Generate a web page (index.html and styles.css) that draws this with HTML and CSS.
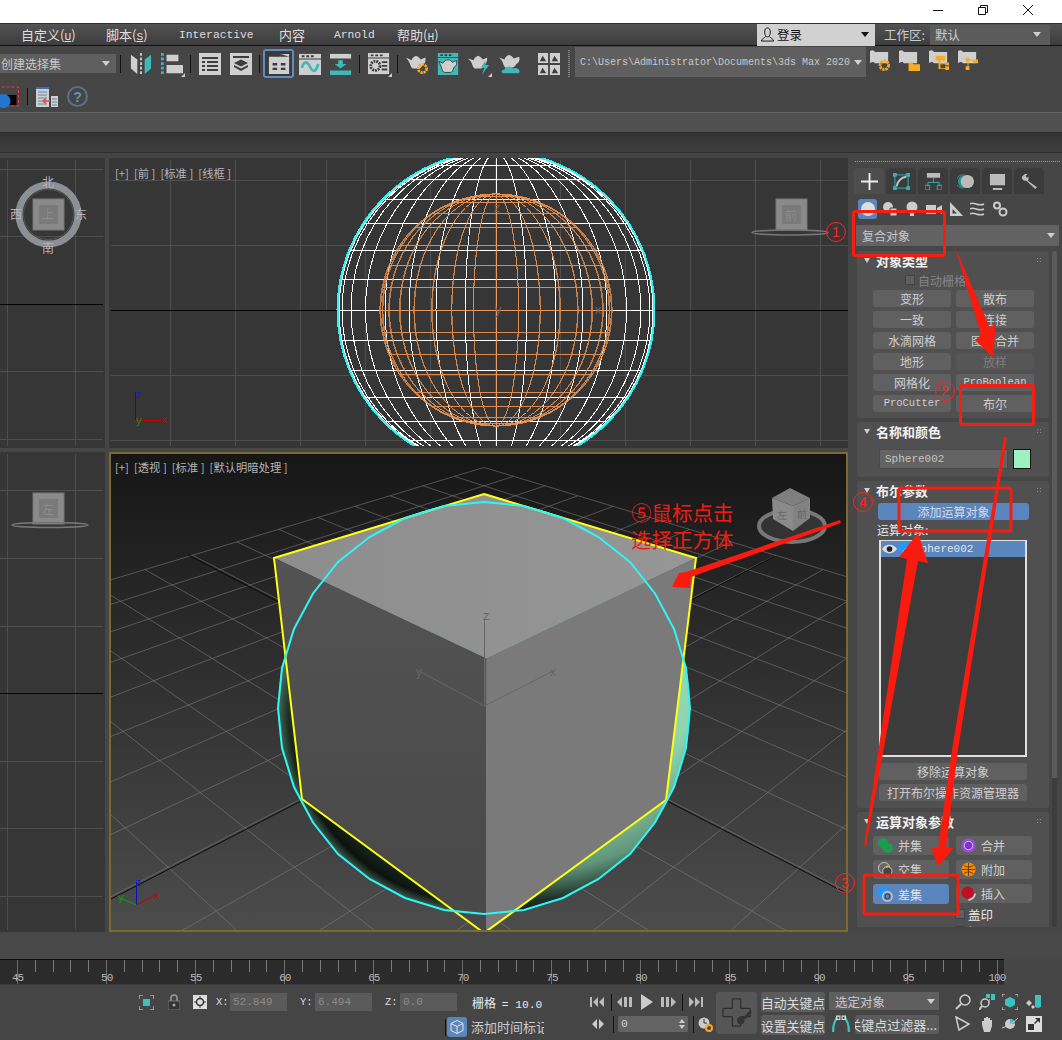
FILE: index.html
```html
<!DOCTYPE html>
<html lang="zh-CN">
<head>
<meta charset="utf-8">
<title>3ds Max 2020</title>
<link rel="stylesheet" href="styles.css">
</head>
<body>
<div class="app">

<header class="titlebar">
  <svg class="winbtn" viewBox="0 0 10 10"><path d="M0 5.500H10"/></svg>
  <svg class="winbtn" viewBox="0 0 10 10"><path d="M.5 2.500H7.500V9.500H.5ZM2.500 2.500V.5H9.500V7.500H7.500"/></svg>
  <svg class="winbtn" viewBox="0 0 10 10"><path d="M0 0L10 10M10 0L0 10"/></svg>
</header>

<nav class="menubar">
  <span class="menu m1">自定义(<u class="la">U</u>)</span>
  <span class="menu m2">脚本(<u class="la">S</u>)</span>
  <span class="menu m3 la">Interactive</span>
  <span class="menu m4">内容</span>
  <span class="menu m5 la">Arnold</span>
  <span class="menu m6">帮助(<u class="la">H</u>)</span>
  <div class="login">
    <svg class="user" viewBox="0 0 16 16"><path d="M5 5.500C5 2 6.500 1 8 1s3 1 3 4.500-1.500 5-3 5-3-1.500-3-5ZM6 10C5 12 2 12 1.500 15H14.500C14 12 11 12 10 10" /></svg>
    <span class="login-text">登录</span><i class="caret dark"></i>
  </div>
  <span class="ws-label">工作区:</span>
  <div class="ws-select"><span>默认</span><i class="caret"></i></div>
</nav>

<section class="toolbar tb1">
  <div class="select sel-set"><span>创建选择集</span><i class="caret"></i></div>
  <i class="sep sep-first"></i>
  <span class="tool"><svg viewBox="0 0 24 24"><path class="l" d="M1 2L8 7V23L1 17Z"/><path class="t" d="M23 2L16 7V23L23 17Z"/><path class="ds" d="M12 0V24" stroke-dasharray="3 2"/></svg></span>
  <span class="tool corner"><svg viewBox="0 0 24 24"><path class="dt" d="M1.500 0V24" stroke-dasharray="3 2"/><path class="l" d="M6 2H19V9H6ZM6 13H24V22H6Z"/></svg></span>
  <i class="sep"></i>
  <span class="tool"><svg viewBox="0 0 22 22"><path class="l" d="M0 0H22V22H0Z"/><path class="k" d="M3 4H19V6H3ZM3 8H6V10H3ZM8 8H19V10H8ZM3 12H6V14H3ZM8 12H19V14H8ZM3 16H6V18H3ZM8 16H19V18H8Z"/></svg></span>
  <span class="tool"><svg viewBox="0 0 22 22"><path class="l" d="M0 0H22V22H0Z"/><path class="k" d="M3 3H19V5H3ZM11 6.500L18 10L11 13.500L4 10ZM4 12L11 15.500L18 12V14L11 18L4 14Z"/></svg></span>
  <i class="sep"></i>
  <span class="tool active"><svg viewBox="0 0 24 22"><path class="l" d="M1 3H14V0H23V22H1Z"/><path class="k" d="M14 0V3H23M5 10H10V12.500H5ZM14 10H19V12.500H14ZM5 15H10V17.500H5ZM14 15H19V17.500H14Z"/></svg></span>
  <span class="tool"><svg viewBox="0 0 24 24"><path class="l" d="M0 1H24V24H0Z"/><path class="k" d="M0 6H24V7H0ZM3 2.500H6V4.500H3ZM8 2.500H11V4.500H8ZM13 2.500H16V4.500H13Z"/><path class="tl" d="M3 16C6 8 9 9 12 15S18 22 21 12"/></svg></span>
  <span class="tool"><svg viewBox="0 0 24 24"><path class="l" d="M0 1H23V6H0Z"/><path class="t" d="M0 19H23V24H0ZM9 8H14V12H18L11.500 17L5 12H9Z"/></svg></span>
  <i class="sep"></i>
  <span class="tool corner"><svg viewBox="0 0 24 24"><path class="l" d="M0 0H23V23H0Z"/><path class="k" d="M0 5H23V6H0ZM3 1.500H6V3.500H3ZM8 1.500H11V3.500H8ZM13 1.500H16V3.500H13ZM15 9H21V11H15ZM15 13H21V15H15ZM15 17H21V19H15Z"/><circle class="kn" cx="8" cy="14" r="5"/></svg></span>
  <i class="sep"></i>
  <span class="tool"><svg viewBox="0 0 24 24"><path class="l" d="M0 5L6 8C7 5 9 4 11 3C13 4 15 5 16 7L21 5C22 8 21 12 18 13C17 15 16 17 14 17H8C6 17 5 14 4 11C3 9 2 8 0 5Z"/><circle class="og" cx="18" cy="17" r="4.500"/></svg></span>
  <span class="tool"><svg viewBox="0 0 24 26"><path class="t" d="M0 0H24V26H0Z"/><path class="k" d="M0 5H24V6H0ZM3 1.500H6V3.500H3ZM8 1.500H11V3.500H8ZM13 1.500H16V3.500H13Z"/><path class="lk" d="M1 10L6 12C8 9 10 8 12 8C14 8 16 9 17 11L22 9C23 12 22 16 19 17C18 20 17 23 15 23H8C6 23 5 20 4 16C3 14 2 12 1 10Z"/></svg></span>
  <span class="tool corner"><svg viewBox="0 0 24 24"><path class="l" d="M0 6L6 8C7 5 9 4 11 3C13 4 15 5 16 7L21 5C21 9 20 12 18 13C17 15 16 17 14 17H8C6 17 5 14 4 11C3 9 2 8 0 6Z"/><path class="t" d="M19 8L14 16H18L15 24L23 13H19Z"/></svg></span>
  <span class="tool tool-last"><svg viewBox="0 0 24 24"><path class="l" d="M0 5L6 7C7 4 9 3 11 2C13 3 15 4 16 6L22 4C23 7 22 11 19 12C18 14 16 16 14 16H8C6 16 5 13 4 10C3 8 2 7 0 5Z"/><path class="t" d="M5 22C2 22 2 18 6 18C7 14 14 14 15 17C19 15 24 18 22 22Z"/></svg></span>
  <span class="tool"><svg viewBox="0 0 24 24"><path class="l" d="M0 0H11V11H0ZM13 0H24V11H13ZM0 13H11V24H0ZM13 13H24V24H13Z"/><path class="k" d="M2 9L5 3L9 9ZM15 9L18 3L22 9ZM2 22L5 16L9 22ZM15 22L18 16L22 22Z"/></svg></span>
  <i class="grip"></i>
  <div class="select path"><span class="la">C:\Users\Administrator\Documents\3ds Max 2020</span><i class="caret"></i></div>
  <span class="tool proj"><svg viewBox="0 0 22 22"><path class="l" d="M0 1C3-1 5 1 5 2H19V14H5C4 12 2 12 0 14Z"/><circle class="og" cx="15" cy="16" r="4.500"/></svg></span>
  <span class="tool proj"><svg viewBox="0 0 22 22"><path class="l" d="M0 1C3-1 5 1 5 2H19V14H5C4 12 2 12 0 14Z"/><path class="o" d="M10 13H14L15 15H22V22H10Z"/></svg></span>
  <span class="tool proj"><svg viewBox="0 0 22 22"><path class="l" d="M0 1C3-1 5 1 5 2H19V14H5C4 12 2 12 0 14Z"/><path class="o" d="M7 6H17V11H7ZM10 11H12V19H17V17H21V21H17V20H10ZM12 14H17V13H21V16H17V15H12Z"/></svg></span>
  <span class="tool proj"><svg viewBox="0 0 22 22"><path class="l" d="M0 1C3-1 5 1 5 2H19V14H5C4 12 2 12 0 14Z"/><path class="o" d="M8 8H12V12H8ZM16 10H21V14H16ZM8 17H12V21H8ZM10 12H11V17H10ZM12 10H16V11H12Z"/></svg></span>
</section>

<section class="toolbar tb2">
  <span class="ball-tool"><svg viewBox="0 0 18 22"><path class="redbox" d="M-4 1H18V20H-4Z"/><rect x="-2" y="9" width="18" height="10" fill="#000"/><circle cx="3" cy="15" r="7" fill="#2175cc"/></svg></span>
  <i class="sep sep-b"></i>
  <span class="tool-b"><svg viewBox="0 0 22 20"><path class="l" d="M0 0H13V20H0Z"/><path class="k" d="M0 0H13V2H0Z"/><path d="M0 0H13V2H0Z" fill="#3a6ebc"/><path class="kb" d="M2 5H11M2 8H11M2 11H11M2 14H11M2 17H11"/><path class="l" d="M15 9H22V20H15Z"/><path class="kb" d="M16 12H21M16 15H21M16 18H21"/><path d="M14 14H7M10 11.500L7 14L10 16.500" fill="none" stroke="#e74c3c" stroke-width="1.500"/></svg></span>
  <span class="help"><span>?</span></span>
</section>

<div class="strip-a"></div>
<div class="strip-b"></div>

<main class="main">
  <div class="views">
    <div class="view">
      <svg viewBox="0 157 105 290">
        <g class="gr"><path d="M7 159V445M75 159V445M0 168H103M0 235H103M0 370H103M0 438H103"/></g>
        <path class="bl" d="M0 303.500H103"/>
        <circle cx="48.500" cy="213.500" r="29.500" class="cube-ring"/>
        <circle cx="48.500" cy="213.500" r="25" class="cube-ring2"/>
        <rect x="33" y="198" width="31" height="31" class="cube-face"/>
        <rect x="39" y="204" width="19" height="19" class="cube-face2"/>
        <text class="vc" x="48" y="218" text-anchor="middle">上</text>
        <text class="vc cp" x="48" y="186" text-anchor="middle">北</text>
        <text class="vc cp" x="48" y="252" text-anchor="middle">南</text>
        <text class="vc cp" x="16" y="218" text-anchor="middle">西</text>
        <text class="vc cp" x="81" y="218" text-anchor="middle">东</text>
      </svg>
    </div>
    <div class="view">
      <svg viewBox="109 157 739 290">
        <defs>
          <g id="ball">
            <ellipse rx="30.600" ry="157"/><ellipse rx="60" ry="157"/><ellipse rx="87" ry="157"/><ellipse rx="111" ry="157"/><ellipse rx="130.500" ry="157"/><ellipse rx="145" ry="157"/><ellipse rx="154" ry="157"/><ellipse rx="157" ry="157"/>
            <path d="M0-157V157M-157 0H157M-154-30.600H154M-154 30.600H154M-145-60H145M-145 60H145M-130.500-87H130.500M-130.500 87H130.500M-111-111H111M-111 111H111M-87-130.500H87M-87 130.500H87M-60-145H60M-60 145H60M-30.600-154H30.600M-30.600 154H30.600"/>
          </g>
          <clipPath id="cf"><rect x="111" y="157" width="737" height="288"/></clipPath>
        </defs>
        <g class="gr"><path d="M170.500 159V445M235.500 159V445M300.500 159V445M365.500 159V445M430.500 159V445M495.500 159V445M560.500 159V445M625.500 159V445M690.500 159V445M755.500 159V445M820.500 159V445M326.500 159V309M111 179.500H848M111 244.500H848M111 374.500H848M111 439.500H848"/></g>
        <path class="bl" d="M111 309.500H848"/>
        <text class="lab" x="115" y="177">[+]  [前 ]  [标准 ]  [线框 ]</text>
        <g clip-path="url(#cf)">
          <circle cx="496" cy="309" r="158" class="cyan-ring"/>
          <use href="#ball" class="wire-w" transform="translate(496 309)"/>
          <use href="#ball" class="wire-o" transform="translate(496 309) scale(.74)"/>
          <use href="#ball" class="wire-o" transform="translate(496 309) scale(.735 .74)"/>
        </g>
        <text class="gz" x="497" y="211" text-anchor="middle">z</text>
        <text class="gz" x="498" y="313" text-anchor="middle">y</text>
        <text class="gz" x="598" y="313" text-anchor="middle">x</text>
        <path d="M135.500 391V419" stroke="#0b0bbf" fill="none"/>
        <path d="M135 419.500H161" stroke="#c00" fill="none"/>
        <text class="ax b" x="138" y="397" text-anchor="middle">z</text>
        <text class="ax g" x="139" y="423" text-anchor="middle">y</text>
        <text class="ax r" x="164" y="422" text-anchor="middle">x</text>
        <rect x="776" y="198" width="31" height="31" class="cube-face"/>
        <rect x="782" y="204" width="19" height="19" class="cube-face2"/>
        <text class="vc" x="791" y="219" text-anchor="middle">前</text>
        <ellipse cx="790" cy="231.500" rx="38" ry="2.500" class="flat-ring"/>
      </svg>
    </div>
    <div class="view">
      <svg viewBox="0 451 105 480">
        <g class="gr"><path d="M7 453V929M75 453V929M0 489.500H103M0 557.500H103M0 625.500H103M0 760.500H103M0 827.500H103M0 895.500H103"/></g>
        <path class="bl" d="M0 692.500H103"/>
        <rect x="33" y="492" width="31" height="31" class="cube-face"/>
        <rect x="39" y="498" width="19" height="19" class="cube-face2"/>
        <text class="vc" x="48" y="513" text-anchor="middle">左</text>
        <ellipse cx="50" cy="524" rx="38" ry="2.500" class="flat-ring"/>
      </svg>
    </div>
    <div class="view active">
      <svg viewBox="111 453 735 476">
        <defs>
          <radialGradient id="sph" cx=".62" cy=".35" r=".7">
            <stop offset="0" stop-color="#a6f2c6"/>
            <stop offset=".6" stop-color="#8fd4ae"/>
            <stop offset=".78" stop-color="#5f957a"/>
            <stop offset=".88" stop-color="#1d2e25"/>
            <stop offset="1" stop-color="#000"/>
          </radialGradient>
          <radialGradient id="rim" gradientUnits="userSpaceOnUse" cx="484" cy="707" r="206">
            <stop offset=".95" stop-color="#7fb89a" stop-opacity="0"/>
            <stop offset="1" stop-color="#7fb89a" stop-opacity=".5"/>
          </radialGradient>
          <linearGradient id="lf" x1="0" y1="0" x2="0" y2="1"><stop offset="0" stop-color="#535353"/><stop offset="1" stop-color="#484848"/></linearGradient>
          <linearGradient id="tf" x1="0" y1="0" x2="1" y2="0"><stop offset="0" stop-color="#8d8d8d"/><stop offset="1" stop-color="#969696"/></linearGradient>
        </defs>
        <g id="floor" class="floor"></g>
        <path class="bl-thin" d="M188 554L340 633M775 555L640 626M301 800L111 898M667 800L846 892"/>
        <circle cx="484" cy="707" r="206" fill="url(#sph)"/>
        <path d="M484 913A206 206 0 0 1 484 501Z" fill="url(#rim)"/>
        <polygon points="484,493 696,557 486,657 274,557" fill="url(#tf)"/>
        <polygon points="274,557 486,657 486,932 302,798" fill="url(#lf)"/>
        <polygon points="696,557 486,657 486,932 666,799" fill="#7a7a7a"/>
        <path class="gzl" d="M484.500 618V705M484.500 705L419 670M484.500 705L553 670M486 657V705"/>
        <text class="gz" x="486" y="619" text-anchor="middle">z</text>
        <text class="gz" x="419" y="675" text-anchor="middle">y</text>
        <text class="gz" x="553" y="675" text-anchor="middle">x</text>
        <path class="yl" d="M484 493L696 557L666 799L484 932L302 798L274 557Z"/>
        <polygon class="cy" points="690,707 686,747 674,786 655,821.500 630,853 598.500,878 563,897 524,909 484,913 444,909 405,897 369.500,878 338,853 313,821.500 294,786 282,747 278,707 282,667 294,628 313,592.500 338,561 369.500,536 405,517 444,505 484,501 524,505 563,517 598.500,536 630,561 655,592.500 674,628 686,667"/>
        <text class="lab" x="115" y="471">[+]  [透视 ]  [标准 ]  [默认明暗处理 ]</text>
        <ellipse cx="792" cy="525" rx="33" ry="16" class="persp-ring"/>
        <polygon points="772,497 790,487 810,497 793,505" fill="#7f7f7f"/>
        <polygon points="772,497 793,505 793,530 773,518" fill="#8a8a8a"/>
        <polygon points="810,497 793,505 793,530 810,517" fill="#838383"/>
        <text class="vc small" x="782" y="518" text-anchor="middle">左</text>
        <text class="vc small" x="802" y="517" text-anchor="middle">前</text>
        <path d="M136.500 881V904" fill="none" stroke="#0b0bbf"/>
        <path d="M136.500 904L157 893" fill="none" stroke="#c00"/>
        <path d="M136.500 904L120 897" fill="none" stroke="#0a0"/>
        <text class="ax b" x="138" y="885" text-anchor="middle">z</text>
        <text class="ax r" x="157" y="898" text-anchor="middle">x</text>
        <text class="ax g" x="121" y="900" text-anchor="middle">y</text>
      </svg>
    </div>
  </div>

  <aside class="panel">
    <div class="panel-grip"></div>
    <div class="tabs">
      <span class="tab on"><svg viewBox="0 0 18 18"><path d="M0 9H18M9 0V18" stroke="#eee" stroke-width="2" fill="none"/></svg></span>
      <span class="tab"><svg viewBox="0 0 18 18"><path d="M2 2H16V16H2ZM3 15C4 8 8 4 15 3" fill="none" stroke="#38b0b0"/><path d="M0 0H4V4H0ZM14 0H18V4H14ZM0 14H4V18H0ZM14 14H18V18H14Z" fill="#38b0b0"/><path d="M4 14C5 8 9 5 14 4" fill="none" stroke="#bbb" stroke-width="2"/></svg></span>
      <span class="tab"><svg viewBox="0 0 18 18"><path d="M2 0H16V5H2Z" fill="#bbb"/><path d="M9 5V10M3 14V10H15V14" fill="none" stroke="#38b0b0"/><path d="M0 13H5V18H0ZM13 13H18V18H13Z" fill="none" stroke="#38b0b0"/></svg></span>
      <span class="tab"><svg viewBox="0 0 18 18"><circle cx="6" cy="9" r="7" fill="none" stroke="#2c8f8f"/><circle cx="8" cy="9" r="7" fill="#2c8f8f"/><circle cx="11" cy="9" r="7" fill="#bbb"/></svg></span>
      <span class="tab"><svg viewBox="0 0 18 18"><path d="M1 1H17V13H1ZM4 16H14V18H4Z" fill="#bbb"/></svg></span>
      <span class="tab"><svg viewBox="0 0 18 18"><path d="M1 4L4 1L7 1L5 3L6 5L8 4L8 7L7 8L17 15L15 17L6 8.500L3 8L1 6Z" fill="#bbb"/></svg></span>
    </div>
    <div class="subtabs">
      <span class="sub on"><svg viewBox="0 0 16 16"><circle cx="8" cy="8" r="7" fill="#ddd"/></svg></span>
      <span class="sub"><svg viewBox="0 0 16 16"><circle cx="6" cy="6" r="5" fill="#ccc"/><path d="M8 7H15V15H8Z" fill="#ccc" stroke="#444"/></svg></span>
      <span class="sub"><svg viewBox="0 0 16 16"><circle cx="8" cy="6" r="5.500" fill="#ccc"/><path d="M6 12H10V15H6Z" fill="#ccc"/></svg></span>
      <span class="sub"><svg viewBox="0 0 16 16"><path d="M0 4H10V13H0ZM11 7L16 4V13L11 10Z" fill="#ccc"/></svg></span>
      <span class="sub"><svg viewBox="0 0 16 16"><path d="M2 1V15H15ZM4.500 8V12.500H9Z" fill="#ccc" fill-rule="evenodd"/></svg></span>
      <span class="sub"><svg viewBox="0 0 16 16"><path d="M0 3C4 0 8 6 14 3M0 8C4 5 8 11 14 8M0 13C4 10 8 16 14 13" fill="none" stroke="#ccc" stroke-width="1.500"/></svg></span>
      <span class="sub"><svg viewBox="0 0 16 16"><circle cx="5" cy="4.500" r="3" fill="none" stroke="#ccc" stroke-width="2"/><circle cx="11" cy="11" r="3.500" fill="none" stroke="#ccc" stroke-width="2"/></svg></span>
    </div>
    <div class="select cat"><span>复合对象</span><i class="caret"></i></div>
    <div class="rollouts-wrap">
      <div class="rollouts">
        <section class="rollout r1">
          <h3><i class="tri"></i>对象类型<i class="dots"></i></h3>
          <label class="autogrid"><i class="check"></i>自动栅格</label>
          <div class="btn-grid">
            <button>变形</button><button>散布</button>
            <button>一致</button><button>连接</button>
            <button>水滴网格</button><button>图形合并</button>
            <button>地形</button><button class="dim">放样</button>
            <button>网格化</button><button class="la">ProBoolean</button>
            <button class="la">ProCutter</button><button>布尔</button>
          </div>
        </section>
        <section class="rollout r2">
          <h3><i class="tri"></i>名称和颜色<i class="dots"></i></h3>
          <div class="name-row"><div class="input la">Sphere002</div><i class="swatch"></i></div>
        </section>
        <section class="rollout r3">
          <h3><i class="tri"></i>布尔参数<i class="dots"></i></h3>
          <button class="wide blue">添加运算对象</button>
          <div class="list-label">运算对象:</div>
          <div class="list">
            <div class="list-row">
              <svg class="eye" viewBox="0 0 16 10"><path d="M0 5C4-1 12-1 16 5C12 11 4 11 0 5Z" fill="#ddd"/><circle cx="8" cy="5" r="3" fill="#222"/></svg>
              <svg class="subt" viewBox="0 0 16 16"><circle cx="6" cy="6" r="6" fill="#1e9bff"/><circle cx="10" cy="11" r="4.500" fill="#444" stroke="#ccc"/></svg>
              <span class="la">Sphere002</span>
            </div>
          </div>
          <button class="wide">移除运算对象</button>
          <button class="wide w2">打开布尔操作资源管理器</button>
        </section>
        <section class="rollout r4">
          <h3><i class="tri"></i>运算对象参数<i class="dots"></i></h3>
          <div class="op-grid">
            <button class="op"><svg viewBox="0 0 16 16"><circle cx="5.500" cy="5.500" r="5.500" fill="#1e9b4e"/><circle cx="10.500" cy="10.500" r="5.500" fill="#1e9b4e"/></svg>并集</button>
            <button class="op"><svg viewBox="0 0 16 16"><circle cx="8" cy="8" r="7.500" fill="#9a4be0"/><circle cx="8" cy="8" r="4.500" fill="#7a3ac0" stroke="#d8c0f0"/></svg>合并</button>
            <button class="op"><svg viewBox="0 0 16 16"><circle cx="6.500" cy="6.500" r="6" fill="#666" stroke="#ccc"/><circle cx="10" cy="10" r="5" fill="#444" stroke="#ccc"/><path d="M8 5L10 3V7Z" fill="#fc0"/></svg>交集</button>
            <button class="op"><svg viewBox="0 0 16 16"><circle cx="8" cy="8" r="7.500" fill="#f08a0d"/><path d="M1 8H15M8 1V15M3 3.500C6 6 10 6 13 3.500M3 12.500C6 10 10 10 13 12.500" stroke="#6a3a05" fill="none"/></svg>附加</button>
            <button class="op on"><svg viewBox="0 0 16 16"><circle cx="6" cy="6" r="6" fill="#1e9bff"/><circle cx="10" cy="10" r="5" fill="#5b85bd" stroke="#ccc" stroke-width="1.500"/><circle cx="10" cy="10" r="2.500" fill="#5b85bd" stroke="#333"/></svg>差集</button>
            <button class="op"><svg viewBox="0 0 16 16"><circle cx="7" cy="7" r="6.500" fill="#c30d20"/><path d="M8 15C12 14 15 11 15 8" stroke="#ccc" stroke-width="2" fill="none"/></svg>插入</button>
          </div>
          <label class="imprint"><i class="check"></i>盖印</label>
          <label class="imprint"><i class="check"></i>切面</label>
        </section>
      </div>
      <div class="scroll"></div>
    </div>
  </aside>
</main>

<div class="track"></div>
<div class="ruler">
  <span>45</span><span>50</span><span>55</span><span>60</span><span>65</span><span>70</span><span>75</span><span>80</span><span>85</span><span>90</span><span>95</span><span class="last">100</span>
</div>

<footer class="status">
  <div class="st-left">
    <div class="st-row1">
      <svg class="ic15" viewBox="0 0 15 15"><path d="M0 4V0H4M11 0H15V4M15 11V15H11M4 15H0V11" fill="none" stroke="#ddd"/><path d="M4 4H11V11H4Z" fill="#3fc0c0"/></svg>
      <svg class="ic-lock" viewBox="0 0 12 16"><path d="M3 7V4C3 0 9 0 9 4V7" fill="none" stroke="#999" stroke-width="1.500"/><path d="M0 7H12V16H0Z" fill="#333" stroke="#777"/><circle cx="6" cy="11" r="1.500" fill="#aaa"/></svg>
      <svg class="ic-box" viewBox="0 0 14 14"><path d="M0 0H14V14H0Z" fill="#ddd"/><path d="M1 7H13M7 1V13" stroke="#444"/><circle cx="7" cy="7" r="3.500" fill="#ddd" stroke="#333" stroke-width="1.500"/></svg>
      <span class="coord-l la">X:</span><span class="coord la">52.849</span>
      <span class="coord-l g la">Y:</span><span class="coord la">6.494</span>
      <span class="coord-l g la">Z:</span><span class="coord la">0.0</span>
      <span class="grid-text">栅格 <span class="la">= 10.0</span></span>
    </div>
    <div class="st-row2">
      <i class="sep sep-s"></i>
      <span class="time-btn"><svg viewBox="0 0 14 14"><path d="M7 0.500L13 3.500V10.500L7 13.500L1 10.500V3.500ZM1 3.500L7 6.500L13 3.500M7 6.500V13.500" fill="none" stroke="#e6e6e6"/></svg></span>
      <span class="time-text">添加时间标记</span>
    </div>
  </div>

  <div class="st-anim">
    <div class="an-row">
      <svg class="an" viewBox="0 0 15 12"><path d="M0 1H2V11H0ZM8 1V11L3 6ZM14 1V11L9 6Z" fill="#bbb"/></svg>
      <i class="sep sep-a"></i>
      <svg class="an" viewBox="0 0 15 12"><path d="M5 1V11L0 6ZM7 1H10V11H7ZM12 1H15V11H12Z" fill="#bbb"/></svg>
      <svg class="an-play" viewBox="0 0 12 16"><path d="M0 0L12 8L0 16Z" fill="#ccc"/></svg>
      <svg class="an" viewBox="0 0 15 12"><path d="M0 1H3V11H0ZM5 1H8V11H5ZM10 1L15 6L10 11Z" fill="#bbb"/></svg>
      <i class="sep sep-a"></i>
      <svg class="an" viewBox="0 0 15 12"><path d="M1 1L6 6L1 11ZM7 1L12 6L7 11ZM13 1H15V11H13Z" fill="#bbb"/></svg>
    </div>
    <div class="an-row r2">
      <svg class="an-key" viewBox="0 0 12 10"><path d="M5 0V10L0 5ZM7 0L12 5L7 10Z" fill="#ccc"/></svg>
      <i class="sep sep-a"></i>
      <div class="spin"><span class="la">0</span><svg class="spin-arrows" viewBox="0 0 6 10"><path d="M3 0L6 4H0ZM0 6H6L3 10Z" fill="#ccc"/></svg></div>
      <i class="sep sep-a"></i>
      <svg class="ic15" viewBox="0 0 15 15"><circle cx="6" cy="6" r="5.500" fill="#ccc"/><path d="M6 2V6H9" stroke="#333" fill="none"/><circle cx="11" cy="11" r="3" fill="none" stroke="#f5a623" stroke-width="2"/></svg>
    </div>
  </div>

  <div class="bigkey"><svg viewBox="0 0 32 32"><path d="M11 1H20V11H30V20H20V30H11V20H1V11H11Z" fill="none" stroke="#222"/><circle cx="20" cy="24" r="4" fill="#333"/><path d="M22 21L30 13L32 15L25 23Z" fill="#333"/></svg></div>

  <div class="st-keys">
    <div class="key-row"><button class="kb-btn">自动关键点</button><div class="select sel-track"><span>选定对象</span><i class="caret"></i></div></div>
    <div class="key-row k2">
      <button class="kb-btn">设置关键点</button>
      <svg class="ic-filter" viewBox="0 0 16 16"><path d="M1 15C1 8 3 4 5 2M15 15C15 8 13 4 11 2" fill="none" stroke="#3fc0c0" stroke-width="2"/><path d="M4 1H7V4H4ZM9 1H12V4H9Z" fill="none" stroke="#ddd"/></svg>
      <button class="filter"><span>关键点过滤器...</span></button>
    </div>
  </div>

  <div class="st-nav">
    <svg viewBox="0 0 16 16"><circle cx="10" cy="6" r="5" fill="none" stroke="#ccc" stroke-width="1.500"/><path d="M6 10L1 15" stroke="#ccc" stroke-width="2"/></svg>
    <svg viewBox="0 0 16 16"><circle cx="6" cy="9" r="4" fill="none" stroke="#ccc" stroke-width="1.500"/><path d="M3 12L0 16" stroke="#ccc" stroke-width="2"/><path d="M7 0H11V4H7ZM12 0H16V6H12ZM10 5H11V8H10Z" fill="#3fc0c0"/></svg>
    <svg viewBox="0 0 16 16"><path d="M0 3V0H3M13 0H16V3M16 13V16H13M3 16H0V13" fill="none" stroke="#ddd"/><path d="M8 3L13 5.500V11L8 13.500L3 11V5.500Z" fill="#3fc0c0"/></svg>
    <svg viewBox="0 0 16 16"><path d="M9 1H15V13L12 14L9 13Z" fill="#3fc0c0"/><path d="M0 9L3 6L6 9L3 12ZM5 13L7 11L9 13L7 15Z" fill="#ccc"/></svg>
    <svg viewBox="0 0 16 16"><path d="M1 1L14 8L4 14Z" fill="none" stroke="#ccc" stroke-width="1.500"/></svg>
    <svg viewBox="0 0 16 16"><path d="M3 9V5H5V2H7V1H9V2H11V4H13V10L11 16H5Z" fill="#ccc"/></svg>
    <svg viewBox="0 0 16 16"><circle cx="8" cy="8" r="5" fill="#ccc"/><path d="M8 8L8 3A5 5 0 0 1 13 8Z" fill="#3fc0c0"/><path d="M0 12C6 10 11 7 16 2" stroke="#ccc" fill="none"/></svg>
    <svg viewBox="0 0 16 16"><path d="M0 0H16V16H0Z" fill="#ddd"/><path d="M2 8H8V14H2ZM9 2H14V7L12 5L9 8L8 7L11 4Z" fill="#333"/></svg>
  </div>
</footer>

<svg class="annot" viewBox="0 0 1062 1040">
  <g class="rbox">
    <rect x="853.500" y="211.500" width="91" height="44" rx="2"/>
    <rect x="960.500" y="385.500" width="73" height="39" rx="2"/>
    <rect x="899" y="488" width="112" height="43" rx="2"/>
    <rect x="864" y="875" width="94" height="39" rx="2"/>
  </g>
  <g class="rarrow">
    <polygon points="955,247 990,328 996,322 993,357 975,340 981,335"/>
    <polygon points="1004,437 1007,437 958,750 946,848 954,848 938,866 931,848 938,848 952,750"/>
    <polygon points="864,846 866,846 918,561 928,563 918,533 899,557 907,559"/>
    <polygon points="840,520 841,523 691,577 690,588 672,587 679,573 686,572"/>
  </g>
  <g class="rnum">
    <circle cx="836" cy="232" r="9.500"/><text x="836" y="237" text-anchor="middle">1</text>
    <circle cx="945" cy="391" r="9.500"/><text x="945" y="396" text-anchor="middle">2</text>
    <circle cx="845" cy="883" r="9.500"/><text x="845" y="888" text-anchor="middle">3</text>
    <circle cx="863" cy="502" r="9.500"/><text x="863" y="507" text-anchor="middle">4</text>
  </g>
  <text class="rtext" x="631" y="521">⑤鼠标点击</text>
  <text class="rtext" x="631" y="548">选择正方体</text>
</svg>

</div>
<script src="grid.js"></script>
</body>
</html>
```

FILE: styles.css
```css
*{box-sizing:border-box}
html,body{margin:0;padding:0}
body{background:#454545;font-family:"Noto Sans CJK SC","Liberation Sans",sans-serif;font-size:12.500px;color:#cfcfcf;overflow:hidden}
.app{position:relative;width:1062px;height:1040px;overflow:hidden;background:#464646}
.la{font-family:"Liberation Mono","Noto Sans CJK SC",monospace;font-size:11.300px}
i{display:block;font-style:normal}
button{font:inherit;color:inherit;border:0;padding:0;margin:0;background:none}
svg{display:block}

/* title */
.titlebar{height:23px;background:#fff;display:flex;justify-content:flex-end;align-items:center;padding:0 29px 3px 0;gap:35px}
.winbtn{width:10px;height:10px;fill:none;stroke:#111;stroke-width:1}

/* menu */
.menubar{height:23px;background:linear-gradient(#525252,#3d3d3d);border-top:1px solid #2f2f2f;border-bottom:1px solid #111;display:flex;align-items:center}
.menu{color:#dedede;white-space:nowrap;font-size:13px}
.menu.la{font-size:11.300px}
.m1{margin-left:21px;width:85px}
.m2{width:73px}
.m3{width:100px}
.m4{width:55px}
.m5{width:63px}
.m6{width:50px}
.login{margin-left:310px;width:118px;height:22px;background:#d1d1d1;color:#111;display:flex;align-items:center;padding-left:3px}
.user{width:15px;height:15px;fill:none;stroke:#111;stroke-width:1}
.login-text{margin-left:2px;flex:1;font-size:12.500px}
.ws-label{margin-left:9px;width:46px;font-size:12.500px;color:#ccc}
.ws-select{width:120px;height:20px;background:#5b5b5b;display:flex;align-items:center;justify-content:space-between;padding:0 5px;color:#ccc}
.caret{width:0;height:0;border-left:4px solid transparent;border-right:4px solid transparent;border-top:5px solid #cfcfcf;margin-right:4px}
.caret.dark{border-top-color:#111;margin-right:6px}

/* toolbars */
.toolbar{display:flex;align-items:center;background:#454545}
.tb1{height:35px}
.tb2{height:31px}
.select{background:#5f5f5f;display:flex;align-items:center;justify-content:space-between;color:#c8c8c8;white-space:nowrap}
.sel-set{width:116px;height:19px;padding-left:1px;margin-top:-1px;font-size:12px}
.sel-set .caret{margin-right:6px}
.sep{width:7px;height:18px;background:linear-gradient(#111,#111) center/1px 100% no-repeat;flex:none}
.sep-first{width:9px}
.tool{width:31px;height:29px;display:flex;align-items:center;justify-content:center;flex:none;position:relative}
.tool svg{width:22px;height:22px}
.tool.active{background:#3a3a3a;border:2px solid #5f8bc4;border-radius:3px}
.tool.corner::after{content:"";position:absolute;right:2px;bottom:1px;border-left:4px solid transparent;border-bottom:4px solid #ccc}
.tool-last{margin-right:8px}
.grip{width:2px;height:28px;margin:0 5px 0 4px;background:repeating-linear-gradient(#888 0 1px,transparent 1px 2px)}
.path{width:291px;height:30px;padding-left:5px;margin-top:-3px;flex:none}
.path .la{font-size:10px}
.proj{width:29.300px;margin-top:-7px}
.proj svg{width:21px;height:21px}
.l{fill:#cfcfcf}
.k{fill:#3d3d3d}
.t{fill:#3fb8b8}
.o{fill:#f5ab23}
.og{fill:none;stroke:#f5a623;stroke-width:3;stroke-dasharray:2.500 .8}
.kn{fill:none;stroke:#3d3d3d;stroke-width:3;stroke-dasharray:2 1}
.ds{stroke:#cfcfcf;stroke-width:2;fill:none}
.dt{stroke:#3fb8b8;stroke-width:3;fill:none}
.tl{fill:none;stroke:#3fb8b8;stroke-width:3}
.lk{fill:#cfcfcf;stroke:#333}
.kb{stroke:#6b84a6;stroke-width:1;fill:none}
.ball-tool{width:19px;height:22px;flex:none}
.ball-tool svg{width:19px;height:22px;overflow:hidden}
.redbox{fill:none;stroke:#f33;stroke-dasharray:3 2}
.sep-b{margin-left:5px;height:17px}
.tool-b{width:22px;height:20px;margin-left:5px;flex:none}
.tool-b svg{width:22px;height:20px}
.help{width:21px;height:21px;margin-left:9px;border-radius:50%;border:2px solid #5d6f84;background:#40464d;display:flex;align-items:center;justify-content:center;font-weight:700;font-family:"Liberation Sans",sans-serif;font-size:14px;color:#7f8a96;flex:none}
.strip-a{height:21px;background:#505050;border-top:1px solid #666;border-bottom:1px solid #2c2c2c}
.strip-b{height:25px;background:linear-gradient(#333 0,#3f3f3f 19px,#2e2e2e 19px,#2e2e2e 20px,#444 20px)}

/* viewports */
.main{display:flex;height:774px}
.views{width:851px;display:grid;grid-template-columns:105px 739px;grid-template-rows:290px 480px;column-gap:4px;row-gap:4px}
.view{background:#363636;overflow:hidden}
.view svg{width:100%;height:100%}
.view.active{border:2px solid #7a6a30;background:linear-gradient(#161616,#4c4c4c)}
.gr{stroke:#4e4e4e;fill:none;shape-rendering:crispEdges}
.bl{stroke:#050505;fill:none;shape-rendering:crispEdges}
.bl-thin{stroke:#0a0a0a;fill:none}
.lab{font-size:11.300px;fill:#b5b5b5;white-space:pre;font-family:"Noto Sans CJK SC",sans-serif}
.vc{font-size:12px;fill:#8c8c8c;font-family:"Noto Sans CJK SC",sans-serif}
.vc.cp{fill:#b4b4b4}
.vc.small{font-size:10px;fill:#666}
.gz{font-size:12px;fill:#666;font-family:"Liberation Mono",monospace}
.ax{font-size:11px;font-family:"Liberation Mono",monospace}
.ax.b{fill:#1a1ad0}
.ax.g{fill:#0a9a0a}
.ax.r{fill:#b01010}
.cube-ring{fill:none;stroke:#8b8f96;stroke-width:7}
.cube-ring2{fill:none;stroke:#555;stroke-width:1}
.cube-face{fill:#8a8a8a;stroke:#777}
.cube-face2{fill:#7a7a7a}
.flat-ring{fill:none;stroke:#777;stroke-width:1.500}
.persp-ring{fill:#333;stroke:#777;stroke-width:4}
.cyan-ring{fill:none;stroke:#2ef2f2;stroke-width:3;shape-rendering:crispEdges}
.wire-w{fill:none;stroke:#fff;stroke-width:1;shape-rendering:crispEdges}
.wire-w *,.wire-o *{vector-effect:non-scaling-stroke}
.wire-o{fill:none;stroke:#e8914f;stroke-width:1;shape-rendering:crispEdges}
.floor line{stroke:#808080;stroke-opacity:.55;stroke-width:1}
.gzl{stroke:#666;fill:none}
.yl{fill:none;stroke:#ffff14;stroke-width:2}
.cy{fill:none;stroke:#2ef6f6;stroke-width:2}

/* command panel */
.panel{width:211px;display:flex;flex-direction:column;padding-left:2px;min-width:0}
.panel-grip{height:10px;background:repeating-linear-gradient(90deg,#999 0 1px,transparent 1px 2px) 2px 3px/205px 1px no-repeat}
.tabs{display:flex;height:26px;gap:2px;padding-left:1px}
.tab{width:30px;height:26px;border-radius:4px 4px 0 0;background:#3b3b3b;display:flex;align-items:center;justify-content:center}
.tab.on{background:#4d4d4d}
.tab svg{width:17px;height:17px}
.subtabs{display:flex;align-items:center;height:29px;gap:3px;padding-left:5px;background:#464646}
.sub{width:19px;height:20px;display:flex;align-items:center;justify-content:center;border-radius:3px}
.sub.on{background:#5b85bd}
.sub svg{width:16px;height:16px}
.cat{width:203px;height:21px;margin:2px 0 0 3px;padding-left:6px;flex:none;background:#626262;font-size:12px}
.rollouts-wrap{display:flex;height:677px;margin-top:5px;overflow:hidden;margin-left:4px}
.rollouts{width:192px;display:flex;flex-direction:column;gap:4px;overflow:hidden;height:676px}
.rollout{background:#505050;border-radius:3px;flex:none;padding:0 16px}
.rollout h3{margin:0 -16px;padding:0 0 2px 19px;height:20px;font-size:13px;line-height:17px;font-weight:700;color:#f2f2f2;position:relative;display:flex;align-items:center}
.tri{position:absolute;left:7px;top:7px;border-left:3.500px solid transparent;border-right:3.500px solid transparent;border-top:5px solid #cfcfcf}
.dots{position:absolute;right:6px;top:6px;width:7px;height:7px;background:radial-gradient(circle,#8a8a8a 0 .8px,transparent .9px) 0 0/3px 3px}
.r1{height:167px}
.r2{height:55px}
.r3{height:327px}
.r4{height:200px}
.autogrid{display:flex;align-items:center;gap:3px;color:#858585;height:18px;padding-left:32px;font-size:12px}
.check{width:10px;height:10px;background:#5f5f5f;border:1px solid #444;flex:none}
.btn-grid{display:grid;grid-template-columns:78px 78px;gap:4px 5px;margin-top:1px}
.btn-grid button{height:17px;background:#606060;border-radius:3px;color:#cfcfcf;font-size:12px;line-height:17px;white-space:nowrap;overflow:hidden}
.btn-grid .dim{color:#7e7e7e;background:#565656}
.btn-grid .la{font-size:10.500px}
.name-row{display:flex;gap:5px;margin:7px 0 0 6px}
.input{width:129px;height:20px;background:#636363;border:1px solid #4a4a4a;padding-left:5px;line-height:18px;color:#c4c4c4;font-size:11px}
.swatch{width:18px;height:20px;background:#9df0c0;border:1px solid #111}
.wide{display:block;width:148px;height:17px;margin-left:6px;background:#606060;border-radius:3px;color:#cfcfcf;font-size:12px;line-height:17px;white-space:nowrap}
.wide.blue{width:151px;margin-left:5px;margin-top:2px;background:#5b85bd;color:#d6dde8}
.wide.w2{margin-top:4px}
.list-label{font-size:12px;margin:1px 0 0 4px;height:19px;line-height:18px;color:#ececec}
.list{width:148px;height:217px;margin:0 0 6px 6px;background:#3c3c3c;border:2px solid #e0e0e0;border-top-width:1px}
.list-row{height:16px;background:#5b85bd;display:flex;align-items:center;gap:1px;color:#e6e6e6;padding-left:1px}
.eye{width:15px;height:10px}
.subt{width:15px;height:15px}
.list-row .la{font-size:11px}
.op-grid{display:grid;grid-template-columns:76px 76px;gap:5px 7px;margin-top:4px}
.op{height:19px;background:#606060;border-radius:3px;display:flex;align-items:center;gap:5px;padding-left:5px;font-size:12px;color:#cfcfcf}
.op svg{width:15px;height:15px}
.op.on{background:#5b85bd;color:#e6e6e6;height:20px}
.imprint{display:flex;align-items:center;gap:3px;margin:3px 0 0 82px;font-size:12.500px;height:14px;color:#e8e8e8}
.scroll{width:5px;height:676px;margin-left:3px;border-radius:3px;background:linear-gradient(#5a5a5a,#5a5a5a) 0 0/5px 527px no-repeat #3d3d3d}

/* time ruler */
.track{height:27px;background:#484848}
.ruler{height:26px;width:1004px;background:repeating-linear-gradient(90deg,#7a7a7a 0 1px,transparent 1px 17.810px) 16.500px 0/987px 12px no-repeat #2b2b2b;border-top:1px solid #0c0c0c;border-bottom:1px solid #3a3a3a;display:flex;padding-left:17px}
.ruler span{flex:none;width:89.060px;border-left:1px solid #6d6d6d;height:100%;font-size:11px;letter-spacing:-1px;font-family:"Liberation Mono",monospace;color:#b8b8b8;display:block;text-indent:-6px;padding-top:11px;line-height:14px;white-space:nowrap}
.ruler .last{text-indent:-9px;width:8px}

/* status */
.status{height:56px;display:flex;background:#454545}
.st-left{width:590px;flex:none}
.st-row1{display:flex;align-items:center;height:18px;margin-top:8px;padding-left:139px}
.ic15{width:15px;height:15px;flex:none}
.ic-lock{width:12px;height:16px;margin-left:14px}
.ic-box{width:14px;height:14px;margin-left:13px}
.coord-l{width:14px;margin-left:9px;color:#dcdcdc;font-size:10.500px}
.coord-l.g{margin-left:13px;width:15px}
.coord{width:57px;height:18px;background:#5a5a5a;color:#8a8a8a;padding-left:3px;line-height:19px;font-size:11px}
.grid-text{margin-left:15px;color:#e8e8e8;white-space:pre;font-size:12px}
.grid-text .la{font-size:11.300px;margin-left:3px}
.st-row2{display:flex;align-items:center;height:20px;margin-top:6px;padding-left:443px}
.sep-s{width:4px;height:17px}
.time-btn{width:20px;height:20px;background:#5b85bd;border-radius:3px;display:flex;align-items:center;justify-content:center;flex:none}
.time-btn svg{width:14px;height:14px}
.time-text{margin-left:4px;width:73px;overflow:hidden;white-space:nowrap;font-size:13px;color:#ccc;line-height:20px}
.st-anim{width:126px;flex:none}
.an-row{display:flex;align-items:center;height:18px;margin-top:8px}
.an-row.r2{margin-top:4px;padding-left:2px}
.an{width:15px;height:12px;flex:none}
.an-play{width:12px;height:16px;flex:none;margin:0 8px 0 9px}
.sep-a{width:12px;height:17px}
.r2 .sep-a{width:10px}
.an-key{width:12px;height:10px;margin-right:4px}
.spin{width:70px;height:16px;background:#636363;display:flex;align-items:center;justify-content:space-between;padding:0 3px;border-radius:2px}
.spin-arrows{width:6px;height:10px}
.bigkey{width:41px;height:42px;margin-top:7px;background:#565656;border-radius:3px;display:flex;align-items:center;justify-content:center;flex:none}
.bigkey svg{width:30px;height:30px}
.st-keys{margin-left:4px;width:180px;flex:none}
.key-row{display:flex;align-items:flex-start;margin-top:7px;gap:4px}
.key-row.k2{margin-top:3px}
.kb-btn{width:64px;height:20px;background:#5b5b5b;border-radius:3px;font-size:12.800px;line-height:19px;white-space:nowrap;overflow:hidden;color:#dcdcdc}
.sel-track{width:110px;height:18px;padding-left:6px;background:#5f5f5f}
.ic-filter{width:18px;height:18px;margin-left:3px}
.filter{width:84px;height:19px;margin-left:1px;background:#5b5b5b;border-radius:3px;font-size:13px;line-height:19px;overflow:hidden;white-space:nowrap;display:flex;justify-content:flex-end;color:#dcdcdc}
.filter span{flex:none;padding-right:2px}
.st-nav{display:grid;grid-template-columns:repeat(4,16px);column-gap:7.500px;row-gap:6px;margin:9px 0 0 14px;align-content:start}
.st-nav svg{width:16px;height:16px}

/* annotations */
.annot{position:absolute;left:0;top:0;width:1062px;height:1040px;pointer-events:none}
.rbox rect{fill:none;stroke:#f81d11;stroke-width:3}
.rarrow polygon{fill:#fa1b0f}
.rnum circle{fill:none;stroke:#f22;stroke-width:1}
.rnum text{fill:#f22;font-size:14px;font-family:"Liberation Sans",sans-serif}
.rtext{fill:#f01c12;font-size:20.500px;font-family:"Noto Sans CJK SC",sans-serif}
```

FILE: grid.js
```js
// Perspective floor grid of the active viewport, drawn from a ground-plane projection.
(function () {
  var host = document.getElementById('floor');
  var NS = 'http://www.w3.org/2000/svg';
  var N = 8, s = 0.044, ox = 484, oy = 704;
  function proj(u, v) {
    var w = 1 + s * (u + v);
    return [(ox + s * (-636 * u + 1604 * v)) / w, (oy + s * 129 * (u + v)) / w];
  }
  function add(a, b) {
    var l = document.createElementNS(NS, 'line');
    l.setAttribute('x1', a[0]); l.setAttribute('y1', a[1]);
    l.setAttribute('x2', b[0]); l.setAttribute('y2', b[1]);
    host.appendChild(l);
  }
  for (var k = -N; k <= N; k++) {
    add(proj(-N, k), proj(N, k));
    add(proj(k, -N), proj(k, N));
  }
})();
```
